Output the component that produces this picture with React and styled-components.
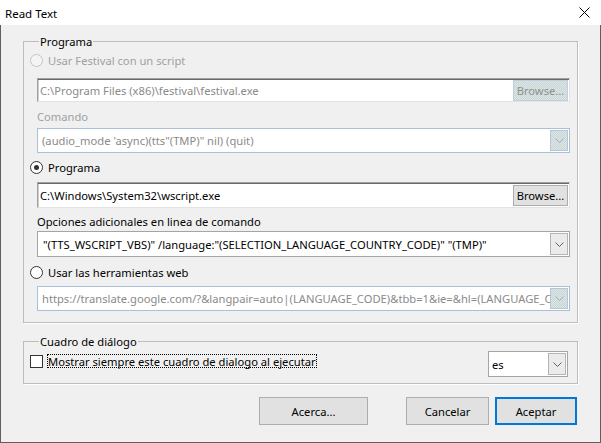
import React from "react";
import styled, { createGlobalStyle, css } from "styled-components";

const Global = createGlobalStyle`
  html, body { margin: 0; padding: 0; background: #f0f0f0; }
  body { font-family: "Noto Sans", "Segoe UI", sans-serif; font-size: 11.2px; color: #000; }
  * { box-sizing: border-box; }
`;

const dotted = css`
  background-color: #cadcee;
  background-image: repeating-conic-gradient(#e4e6cf 0 25%, #c3d5ea 0 50%);
  background-size: 2px 2px;
`;

const Window = styled.div`
  width: 601px;
  height: 443px;
  display: flex;
  flex-direction: column;
  background: #f0f0f0;
  overflow: hidden;
`;

const TitleBar = styled.div`
  height: 25px;
  flex: none;
  background: #fff;
  display: flex;
  align-items: center;
  justify-content: space-between;
  padding: 0 11px 0 5px;
  line-height: 15px;
`;

const Title = styled.span`
  font-size: 11.5px;
  padding-top: 1px;
`;

const Body = styled.div`
  flex: 1;
  border: 1px solid #5f5f5f;
  border-top: none;
  padding: 9px 23px 0 22px;
  display: flex;
  flex-direction: column;
`;

const Group = styled.fieldset`
  margin: ${(p) => p.$mt || 0}px 0 0 0;
  padding: ${(p) => p.$pt || 0}px 6px ${(p) => p.$pb || 0}px 6px;
  width: 555px;
  border: 1px solid #bdbdbd;
  box-shadow: 1px 1px 0 #fff;
  min-width: 0;
  display: flex;
  flex-direction: column;
`;

const Legend = styled.legend`
  padding: 0 1px 0 1px;
  margin-left: 9px;
  line-height: 15px;
`;

const OptionRow = styled.label`
  display: flex;
  align-items: center;
  height: 16px;
  margin-top: ${(p) => p.$mt}px;
  color: ${(p) => (p.$disabled ? "#a0a0a0" : "#000")};
  gap: 5px;
`;

const Radio = styled.span`
  width: 13px;
  height: 13px;
  border-radius: 50%;
  border: 1px solid ${(p) => (p.$disabled ? "#c4c4c4" : "#333")};
  background: ${(p) => (p.$disabled ? "#f4f4f4" : "#fff")};
  display: flex;
  align-items: center;
  justify-content: center;
  flex: none;
  &::after {
    content: "";
    display: ${(p) => (p.$checked ? "block" : "none")};
    width: 5px;
    height: 5px;
    border-radius: 50%;
    background: #333;
  }
`;

const Indent = styled.div`
  margin-left: 7px;
  margin-top: ${(p) => p.$mt}px;
  width: 533px;
`;

const Label = styled.div`
  margin-left: 7px;
  margin-top: ${(p) => p.$mt}px;
  height: 15px;
  line-height: 15px;
  color: ${(p) => (p.$disabled ? "#a0a0a0" : "#000")};
`;

const Edit = styled.div`
  height: ${(p) => p.$h}px;
  background: #fff;
  border-top: 1px solid #a0a0a0;
  border-left: 1px solid #a0a0a0;
  border-right: 1px solid #e3e3e3;
  border-bottom: 1px solid #e3e3e3;
  box-shadow: inset 0 1px 0 #6a6a6a, inset 1px 0 0 #d0d0d0;
  display: flex;
  align-items: center;
  padding: 1px 1px 1px 2px;
  color: ${(p) => (p.$disabled ? "#8a8a8a" : "#000")};
`;

const EditText = styled.span`
  flex: 1;
  white-space: nowrap;
  overflow: hidden;
`;

const Browse = styled.button`
  font: inherit;
  height: 21px;
  width: 55px;
  padding: 0;
  flex: none;
  border: 1px solid ${(p) => (p.$disabled ? "#bfcfdf" : "#adadad")};
  color: ${(p) => (p.$disabled ? "#8f8f8f" : "#000")};
  ${(p) => (p.$disabled ? dotted : css`background: #e1e1e1;`)}
  line-height: 17px;
`;

const Combo = styled.div`
  height: ${(p) => p.$h}px;
  width: ${(p) => (p.$w ? p.$w + "px" : "auto")};
  margin-right: ${(p) => p.$mr || 0}px;
  background: #fff;
  border: 1px solid ${(p) => (p.$disabled ? "#aac0d8" : "#a5a5a5")};
  display: flex;
  align-items: stretch;
  padding: 1px;
  color: ${(p) => (p.$disabled ? "#8a8a8a" : "#000")};
`;

const ComboText = styled.span`
  flex: 1;
  white-space: nowrap;
  overflow: hidden;
  padding-left: ${(p) => p.$pl ?? 3}px;
  display: flex;
  align-items: center;
`;

const DropBtn = styled.span`
  width: 18px;
  flex: none;
  display: flex;
  align-items: center;
  justify-content: center;
  border: 1px solid ${(p) => (p.$disabled ? "#b3c7dc" : "#b4b4b4")};
  ${(p) => (p.$disabled ? dotted : css`background: #ebebeb;`)}
`;

const Chevron = ({ color = "#606060" }) => (
  <svg width="9" height="5" viewBox="0 0 9 5">
    <path d="M0.5 0.5 L4.5 4.5 L8.5 0.5" fill="none" stroke={color} strokeWidth="1" />
  </svg>
);

const DialogRow = styled.div`
  display: flex;
  align-items: flex-start;
  justify-content: space-between;
  margin-top: 2px;
`;

const CheckRow = styled.label`
  display: flex;
  align-items: center;
  margin-top: 3px;
  gap: 4px;
`;

const Checkbox = styled.span`
  width: 13px;
  height: 13px;
  border: 1px solid #333;
  background: #fff;
  flex: none;
`;

const Focus = styled.span`
  outline: 1px dotted #000;
  outline-offset: -1px;
  padding: 0 1px;
  height: 14px;
  display: flex;
  align-items: center;
`;

const Buttons = styled.div`
  display: flex;
  justify-content: flex-end;
  margin-top: 13px;
`;

const Button = styled.button`
  font: inherit;
  height: 28px;
  width: ${(p) => p.$w}px;
  margin-left: ${(p) => p.$ml || 0}px;
  background: #e1e1e1;
  border: ${(p) => (p.$default ? "2px solid #0078d7" : "1px solid #adadad")};
  color: #000;
  padding: 0;
`;

const Close = () => (
  <svg width="11" height="11" viewBox="0 0 11 11">
    <path d="M0.5 0.5 L10.5 10.5 M10.5 0.5 L0.5 10.5" stroke="#000" strokeWidth="1" />
  </svg>
);

export default function App() {
  return (
    <>
      <Global />
      <Window>
        <TitleBar>
          <Title>Read Text</Title>
          <Close />
        </TitleBar>
        <Body>
          <Group $pt={3} $pb={11}>
            <Legend>Programa</Legend>
            <OptionRow $mt={0} $disabled>
              <Radio $disabled />
              Usar Festival con un script
            </OptionRow>
            <Indent $mt={10}>
              <Edit $h={24} $disabled>
                <EditText>C:\Program Files (x86)\festival\festival.exe</EditText>
                <Browse $disabled>Browse...</Browse>
              </Edit>
            </Indent>
            <Label $mt={7} $disabled>Comando</Label>
            <Indent $mt={4}>
              <Combo $h={25} $disabled>
                <ComboText>(audio_mode 'async)(tts"(TMP)" nil) (quit)</ComboText>
                <DropBtn $disabled>
                  <Chevron color="#a8b4c0" />
                </DropBtn>
              </Combo>
            </Indent>
            <OptionRow $mt={6}>
              <Radio $checked />
              Programa
            </OptionRow>
            <Indent $mt={7}>
              <Edit $h={26}>
                <EditText>C:\Windows\System32\wscript.exe</EditText>
                <Browse>Browse...</Browse>
              </Edit>
            </Indent>
            <Label $mt={6}>Opciones adicionales en linea de comando</Label>
            <Indent $mt={2}>
              <Combo $h={26}>
                <ComboText $pl={4}>
                  "(TTS_WSCRIPT_VBS)" /language:"(SELECTION_LANGUAGE_COUNTRY_CODE)" "(TMP)"
                </ComboText>
                <DropBtn>
                  <Chevron />
                </DropBtn>
              </Combo>
            </Indent>
            <OptionRow $mt={7}>
              <Radio />
              Usar las herramientas web
            </OptionRow>
            <Indent $mt={6}>
              <Combo $h={25} $disabled>
                <ComboText>
                  https://translate.google.com/?&amp;langpair=auto|(LANGUAGE_CODE)&amp;tbb=1&amp;ie=&amp;hl=(LANGUAGE_CODE)
                </ComboText>
                <DropBtn $disabled>
                  <Chevron color="#a8b4c0" />
                </DropBtn>
              </Combo>
            </Indent>
          </Group>
          <Group $mt={11} $pt={0} $pb={6}>
            <Legend>Cuadro de diálogo</Legend>
            <DialogRow>
              <CheckRow>
                <Checkbox />
                <Focus>Mostrar siempre este cuadro de dialogo al ejecutar</Focus>
              </CheckRow>
              <Combo $h={26} $w={80} $mr={3}>
                <ComboText $pl={2}>es</ComboText>
                <DropBtn>
                  <Chevron />
                </DropBtn>
              </Combo>
            </DialogRow>
          </Group>
          <Buttons>
            <Button $w={109}>Acerca...</Button>
            <Button $w={83} $ml={38}>Cancelar</Button>
            <Button $w={82} $ml={6} $default>Aceptar</Button>
          </Buttons>
        </Body>
      </Window>
    </>
  );
}
